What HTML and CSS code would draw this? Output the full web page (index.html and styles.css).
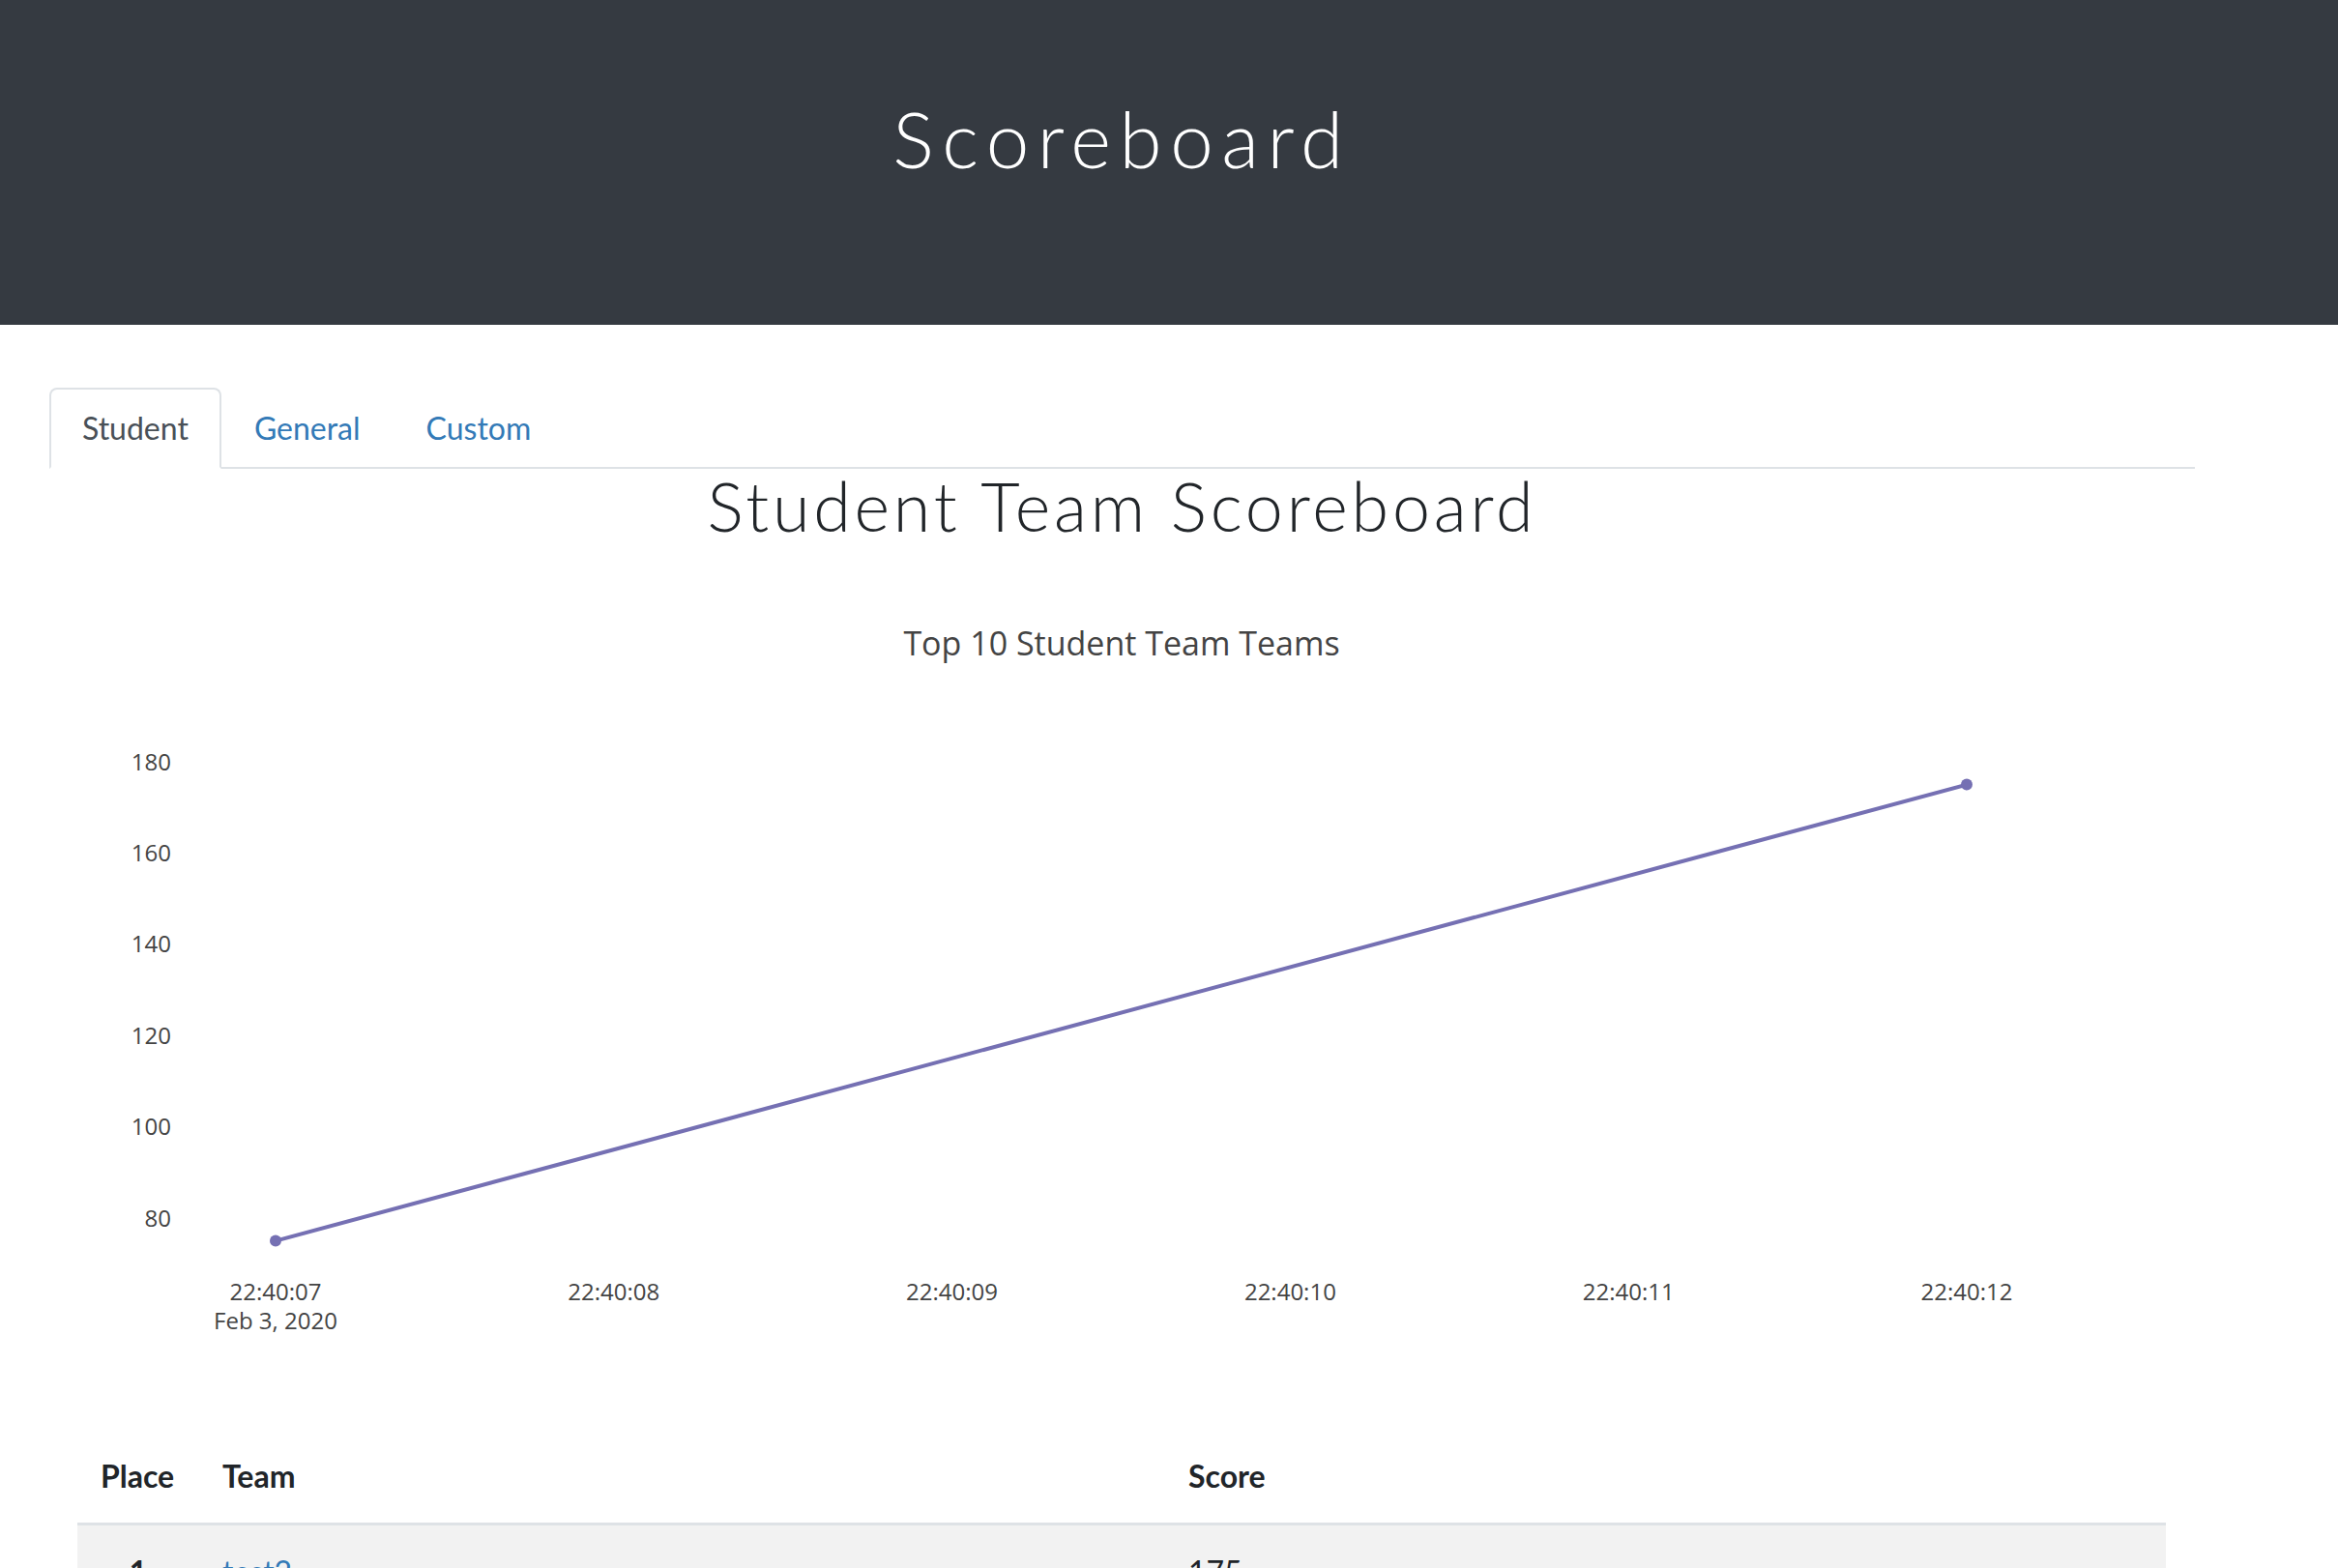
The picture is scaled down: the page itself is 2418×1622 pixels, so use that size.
FILE: index.html
```html
<!DOCTYPE html>
<html lang="en">
<head>
<meta charset="utf-8">
<title>Scoreboard</title>
<link rel="stylesheet" href="styles.css">
</head>
<body>
<header class="jumbotron">
  <div class="container">
    <h1 class="jumbo-title">Scoreboard</h1>
  </div>
</header>
<main class="container">
  <nav class="nav-tabs">
    <a class="nav-link active" href="#">Student</a>
    <a class="nav-link" href="#">General</a>
    <a class="nav-link" href="#">Custom</a>
  </nav>
  <h1 class="section-title">Student Team Scoreboard</h1>
  <svg class="chart" width="2219" height="900" viewBox="0 0 2219 900" xmlns="http://www.w3.org/2000/svg">
    <text class="chart-title" x="1109" y="123" text-anchor="middle">Top 10 Student Team Teams</text>
    <g class="tick" text-anchor="end">
      <text x="126" y="241.5">180</text>
      <text x="126" y="335.9">160</text>
      <text x="126" y="430.3">140</text>
      <text x="126" y="524.7">120</text>
      <text x="126" y="619.1">100</text>
      <text x="126" y="713.5">80</text>
    </g>
    <g class="tick" text-anchor="middle">
      <text x="234" y="789.5">22:40:07</text>
      <text x="234" y="819.5">Feb 3, 2020</text>
      <text x="583.8" y="789.5">22:40:08</text>
      <text x="933.6" y="789.5">22:40:09</text>
      <text x="1283.4" y="789.5">22:40:10</text>
      <text x="1633.2" y="789.5">22:40:11</text>
      <text x="1983" y="789.5">22:40:12</text>
    </g>
    <polyline points="234,728.6 1983,256.6" fill="none" stroke="#7570b3" stroke-width="4"/>
    <circle cx="234" cy="728.6" r="6" fill="#7570b3"/>
    <circle cx="1983" cy="256.6" r="6" fill="#7570b3"/>
  </svg>
  <table class="scoreboard">
    <colgroup>
      <col class="col-place">
      <col class="col-team">
      <col>
    </colgroup>
    <thead>
      <tr>
        <th>Place</th>
        <th>Team</th>
        <th>Score</th>
      </tr>
    </thead>
    <tbody>
      <tr class="stripe">
        <th class="place">1</th>
        <td><a class="team-link" href="#">test2</a></td>
        <td>175</td>
      </tr>
    </tbody>
  </table>
</main>
</body>
</html>
```
FILE: styles.css
```css
html, body {
  margin: 0;
  padding: 0;
  background: #ffffff;
}
body {
  font-family: Lato, "Open Sans", sans-serif;
  font-size: 32px;
  line-height: 1.5;
  color: #212529;
}
.container {
  width: 2219px;
  margin-left: 51px;
}
.jumbotron {
  background: #353a41;
  height: 336px;
  padding-top: 95px;
  box-sizing: border-box;
}
.jumbo-title {
  margin: 0;
  font-family: Lato, sans-serif;
  font-weight: 300;
  font-size: 80px;
  line-height: 1.2;
  letter-spacing: 8.5px;
  text-align: center;
  color: #ffffff;
}
main.container {
  padding-top: 65px;
}
.nav-tabs {
  display: flex;
  border-bottom: 2px solid #dee2e6;
  height: 84px;
  box-sizing: border-box;
}
.nav-link {
  display: block;
  padding: 16px 32px;
  border: 2px solid transparent;
  border-radius: 8px 8px 0 0;
  line-height: 48px;
  color: #337ab7;
  text-decoration: none;
  height: 84px;
  box-sizing: border-box;
}
.nav-link.active {
  color: #495057;
  background: #ffffff;
  border-color: #dee2e6 #dee2e6 #ffffff;
}
.section-title {
  margin: 0;
  padding-top: 3px;
  font-family: Lato, sans-serif;
  font-weight: 300;
  font-size: 70px;
  line-height: 70px;
  letter-spacing: 3.8px;
  text-align: center;
  color: #212529;
}
.chart {
  display: block;
  margin-top: -3px;
}
.chart-title {
  font-family: "Open Sans", sans-serif;
  font-size: 34px;
  fill: #444444;
}
.tick text {
  font-family: "Open Sans", sans-serif;
  font-size: 24px;
  fill: #444444;
}
.scoreboard {
  margin: 24px 29px 0;
  width: 2160px;
  border-collapse: collapse;
  table-layout: fixed;
}
.col-place { width: 126px; }
.col-team { width: 999px; }
.scoreboard th,
.scoreboard td {
  padding: 24px;
  text-align: left;
  line-height: 48px;
  vertical-align: top;
}
.scoreboard thead th {
  font-weight: 700;
  border-bottom: 3px solid #dee2e6;
}
.scoreboard .place {
  text-align: center;
  font-weight: 700;
}
.stripe {
  background: #f2f2f2;
}
.team-link {
  color: #337ab7;
  text-decoration: none;
}
```
